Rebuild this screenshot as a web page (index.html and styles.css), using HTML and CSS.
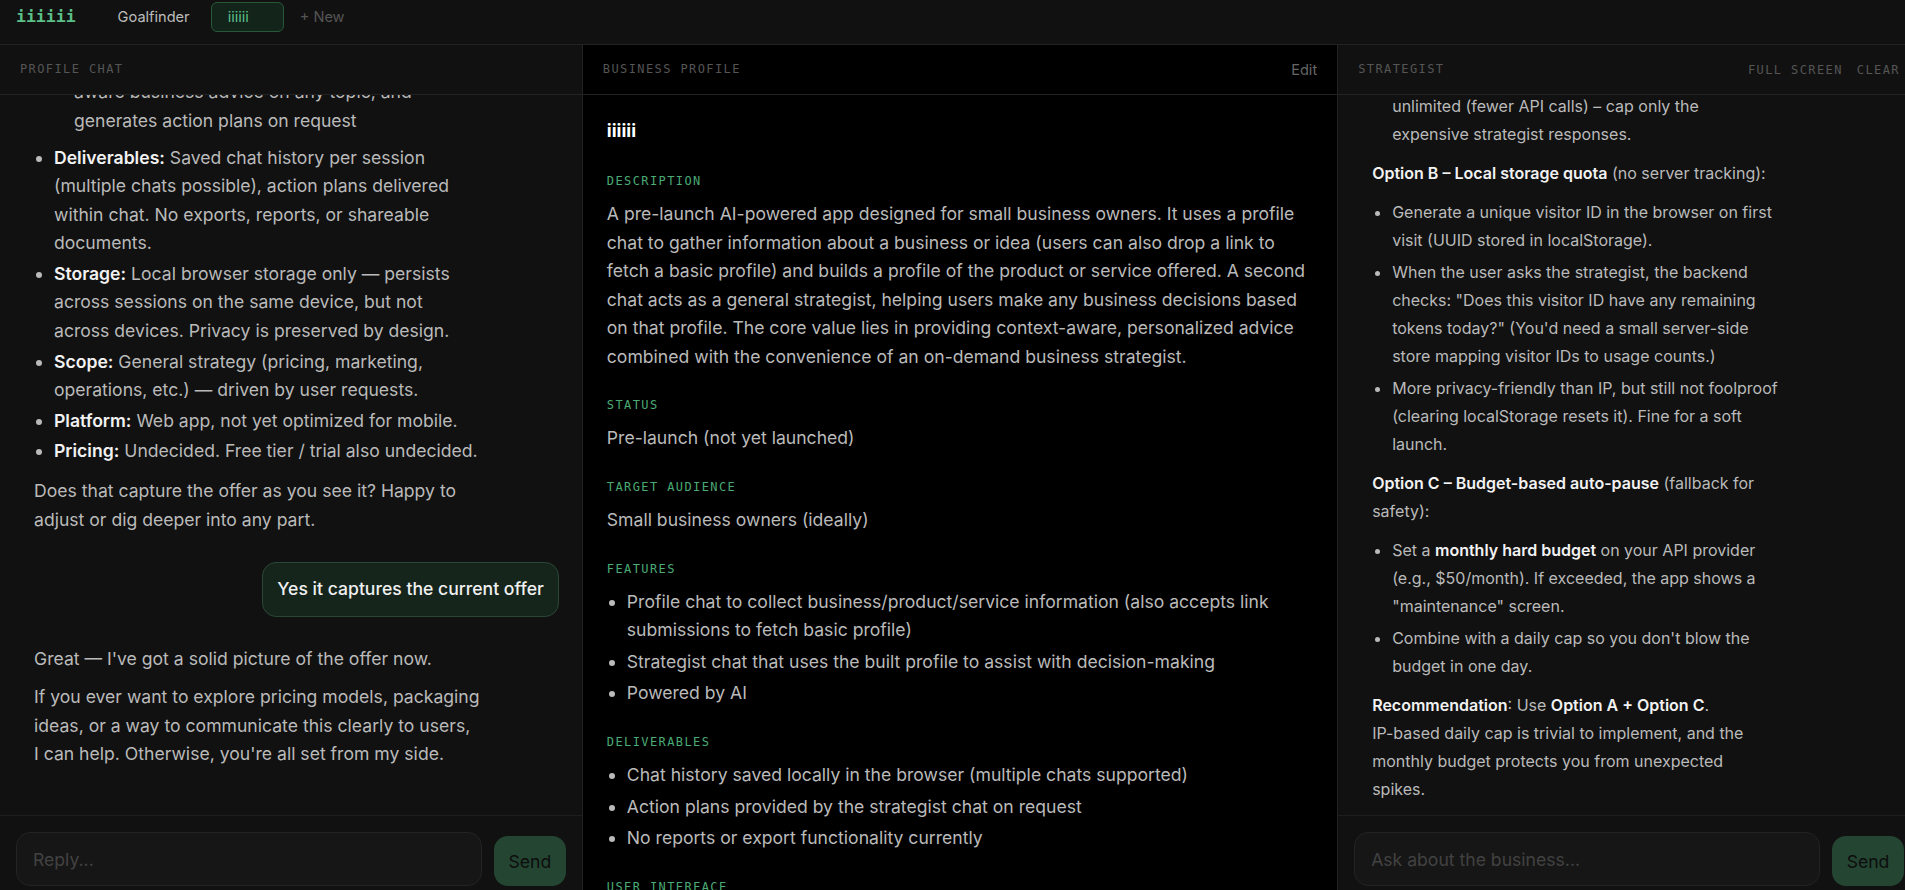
FILE: index.html
```html
<!DOCTYPE html>
<html lang="en">
<head>
    <meta charset="UTF-8">
    <meta name="viewport" content="width=device-width, initial-scale=1.0">
    <title>iiiiii - Business Profile</title>
    <link rel="stylesheet" href="styles.css">
</head>
<body>
    <!-- top bar -->
    <header class="topbar">
        <div class="logo">iiiiii</div>
        <nav class="tabs">
            <button class="tab">Goalfinder</button>
            <button class="tab tab-active">iiiiii</button>
            <button class="tab-new">+ New</button>
        </nav>
    </header>

    <main class="workspace">
        <!-- profile chat -->
        <section class="panel chat-panel">
            <div class="panel-header">
                <span class="panel-title">Profile chat</span>
            </div>
            <div class="chat-log">
                <div class="chat-thread">
                    <div class="msg">
                        <p>Hi! Let's put together a profile of your business. Tell me what you're building, or paste a link and I'll pull the basics from it.</p>
                    </div>
                    <div class="msg msg-user">It's an AI app for small business owners. One chat builds a profile of the business, the other one is a strategist you can ask anything.</div>
                    <div class="msg">
                        <p>Nice — a clear two-part setup. A few questions so the profile is accurate:</p>
                        <ul>
                            <li>What stage are you at — idea, pre-launch, or live?</li>
                            <li>Who is it for, specifically?</li>
                            <li>How does the profile get built — only through chat, or also from other sources?</li>
                        </ul>
                    </div>
                    <div class="msg msg-user">Pre-launch. Small business owners, ideally. Users can also drop a link and it fetches a basic profile.</div>
                    <div class="msg">
                        <p>Thanks. A couple more things that usually matter for positioning:</p>
                        <ul>
                            <li>What does it do better than a generic AI chatbot?</li>
                            <li>Is there anything the strategist should not do?</li>
                            <li>How do you plan to reach the first users?</li>
                        </ul>
                    </div>
                    <div class="msg msg-user">The difference is context: the strategist knows the business profile, so the advice is specific. It shouldn't act like a lawyer or accountant. First users come from my network and a few small business communities.</div>
                    <div class="msg">
                        <p>That's a useful distinction. So the core value is context-aware, personalized advice combined with the convenience of an on-demand strategist. Is that a fair way to put it?</p>
                    </div>
                    <div class="msg msg-user">Yes, that's exactly it.</div>
                    <div class="msg">
                        <p>Got it. And what does the strategist actually hand back — answers only, or also plans, reports or exports?</p>
                    </div>
                    <div class="msg msg-user">It gives advice on anything and writes action plans when asked. No reports or exports. History is saved per session and you can have multiple chats.</div>
                    <div class="msg">
                        <p>Where does that history live? Are there user accounts?</p>
                    </div>
                    <div class="msg msg-user">Local browser storage only, no accounts. Web app, not optimized for mobile yet. Pricing is undecided, same for a free tier or trial.</div>
                    <div class="msg">
                        <p>Thanks — here's the offer as I understand it:</p>
                        <ul>
                            <li><strong>Product:</strong> AI-powered web app for small business owners that builds a business profile and then acts as a strategist on top of it.</li>
                            <li><strong>Stage:</strong> Pre-launch.</li>
                            <li><strong>Audience:</strong> Small business owners (ideally).</li>
                            <li><strong>Features:</strong>
                                <ul>
                                    <li>Profile chat — collects info about the business or idea, and can fetch a basic profile from a link</li>
                                    <li>Strategist chat — uses the profile for context-aware business advice on any topic, and generates action plans on request</li>
                                </ul>
                            </li>
                            <li><strong>Deliverables:</strong> Saved chat history per session (multiple chats possible), action plans delivered within chat. No exports, reports, or shareable documents.</li>
                            <li><strong>Storage:</strong> Local browser storage only — persists across sessions on the same device, but not across devices. Privacy is preserved by design.</li>
                            <li><strong>Scope:</strong> General strategy (pricing, marketing, operations, etc.) — driven by user requests.</li>
                            <li><strong>Platform:</strong> Web app, not yet optimized for mobile.</li>
                            <li><strong>Pricing:</strong> Undecided. Free tier / trial also undecided.</li>
                        </ul>
                        <p>Does that capture the offer as you see it? Happy to adjust or dig deeper into any part.</p>
                    </div>
                    <div class="msg msg-user">Yes it captures the current offer</div>
                    <div class="msg">
                        <p>Great — I've got a solid picture of the offer now.</p>
                        <p>If you ever want to explore pricing models, packaging ideas, or a way to communicate this clearly to users,<br>I can help. Otherwise, you're all set from my side.</p>
                    </div>
                </div>
            </div>
            <form class="composer">
                <input type="text" placeholder="Reply...">
                <button type="button">Send</button>
            </form>
        </section>

        <!-- business profile -->
        <section class="panel profile-panel">
            <div class="panel-header">
                <span class="panel-title">Business profile</span>
                <button class="header-link">Edit</button>
            </div>
            <div class="profile-body">
                <h1 class="profile-name">iiiiii</h1>

                <div class="field">
                    <h2 class="field-label">Description</h2>
                    <p>A pre-launch AI-powered app designed for small business owners. It uses a profile chat to gather information about a business or idea (users can also drop a link to fetch a basic profile) and builds a profile of the product or service offered. A second chat acts as a general strategist, helping users make any business decisions based on that profile. The core value lies in providing context-aware, personalized advice combined with the convenience of an on-demand business strategist.</p>
                </div>

                <div class="field">
                    <h2 class="field-label">Status</h2>
                    <p>Pre-launch (not yet launched)</p>
                </div>

                <div class="field">
                    <h2 class="field-label">Target audience</h2>
                    <p>Small business owners (ideally)</p>
                </div>

                <div class="field">
                    <h2 class="field-label">Features</h2>
                    <ul>
                        <li>Profile chat to collect business/product/service information (also accepts link submissions to fetch basic profile)</li>
                        <li>Strategist chat that uses the built profile to assist with decision-making</li>
                        <li>Powered by AI</li>
                    </ul>
                </div>

                <div class="field">
                    <h2 class="field-label">Deliverables</h2>
                    <ul>
                        <li>Chat history saved locally in the browser (multiple chats supported)</li>
                        <li>Action plans provided by the strategist chat on request</li>
                        <li>No reports or export functionality currently</li>
                    </ul>
                </div>

                <div class="field">
                    <h2 class="field-label">User interface</h2>
                    <ul>
                        <li>Two chats side by side: profile chat and strategist chat</li>
                        <li>Editable business profile panel</li>
                        <li>Web app, not yet optimized for mobile</li>
                    </ul>
                </div>

                <div class="field">
                    <h2 class="field-label">Storage</h2>
                    <p>Local browser storage only, no user accounts</p>
                </div>

                <div class="field">
                    <h2 class="field-label">Platform</h2>
                    <p>Web app (not yet optimized for mobile)</p>
                </div>

                <div class="field">
                    <h2 class="field-label">Pricing</h2>
                    <p>Undecided (free tier / trial also undecided)</p>
                </div>
            </div>
        </section>

        <!-- strategist chat -->
        <section class="panel chat-panel">
            <div class="panel-header">
                <span class="panel-title">Strategist</span>
                <div class="header-actions">
                    <button class="header-action">Full screen</button>
                    <button class="header-action">Clear</button>
                </div>
            </div>
            <div class="chat-log chat-log-compact">
                <div class="chat-thread chat-thread-live">
                    <div class="msg msg-user">How do I keep API costs under control after launch? There are no accounts, so I can't limit per user.</div>
                    <div class="msg">
                        <p>Without accounts you can't enforce per-user limits perfectly, but there are solid options for a soft launch:</p>
                        <p><strong>Option A – IP-based daily cap</strong> (simplest):</p>
                        <ul>
                            <li>Count strategist requests per IP address on the server and block after a set number per day (e.g., 20).</li>
                            <li>Reset counters daily; a small key-value store is enough.</li>
                            <li>Profile chat can stay<br>unlimited (fewer API calls) – cap only the<br>expensive strategist responses.</li>
                        </ul>
                        <p><strong>Option B – Local storage quota</strong> (no server tracking):</p>
                        <ul>
                            <li>Generate a unique visitor ID in the browser on first visit (UUID stored in localStorage).</li>
                            <li>When the user asks the strategist, the backend checks: "Does this visitor ID have any remaining tokens today?" (You'd need a small server-side store mapping visitor IDs to usage counts.)</li>
                            <li>More privacy-friendly than IP, but still not foolproof (clearing localStorage resets it). Fine for a soft launch.</li>
                        </ul>
                        <p><strong>Option C – Budget-based auto-pause</strong> (fallback for safety):</p>
                        <ul>
                            <li>Set a <strong>monthly hard budget</strong> on your API provider (e.g., $50/month). If exceeded, the app shows a "maintenance" screen.</li>
                            <li>Combine with a daily cap so you don't blow the budget in one day.</li>
                        </ul>
                        <p><strong>Recommendation</strong>: Use <strong>Option A + Option C</strong>.<br>IP-based daily cap is trivial to implement, and the monthly budget protects you from unexpected<br>spikes.</p>
                    </div>
                </div>
            </div>
            <form class="composer">
                <input type="text" placeholder="Ask about the business...">
                <button type="button">Send</button>
            </form>
        </section>
    </main>
</body>
</html>
```

FILE: styles.css
```css
/* base */
* {
    margin: 0;
    padding: 0;
    box-sizing: border-box;
}

body {
    font-family: Inter, "Noto Sans", sans-serif;
    font-size: 17.6px;
    line-height: 1.625;
    background-color: #111111;
    color: #bababa;
    height: 100vh;
    overflow: hidden;
}

button,
input {
    font-family: inherit;
}

button {
    cursor: pointer;
}

/* top bar */
.topbar {
    height: 45px;
    display: flex;
    align-items: center;
    padding: 2px 16px 12px;
    background: #111111;
    border-bottom: 1px solid #222222;
}

.logo {
    font-family: "DejaVu Sans Mono", monospace;
    font-size: 16.5px;
    font-weight: bold;
    line-height: 1;
    color: #5bbf88;
    margin-right: 25px;
}

.tabs {
    display: flex;
    align-items: center;
    gap: 4px;
}

.tab {
    height: 30px;
    min-width: 73px;
    padding: 0 16px;
    border: 1px solid transparent;
    border-radius: 6px;
    background: none;
    color: #bdbdbd;
    font-size: 14.6px;
    text-align: left;
}

.tab-active {
    border-color: #28573a;
    background: #13241a;
    color: #5bbf88;
}

.tab-new {
    padding: 0 12px;
    border: none;
    background: none;
    color: #555555;
    font-size: 14.6px;
}

/* three columns */
.workspace {
    display: grid;
    grid-template-columns: 1fr 1.3fr 1fr;
    width: 1920px;
    height: calc(100vh - 45px);
}

.panel {
    display: flex;
    flex-direction: column;
    min-height: 0;
    overflow: hidden;
    background: #111111;
}

.profile-panel {
    background: #000000;
    border-left: 1px solid #222222;
    border-right: 1px solid #222222;
}

.panel-header {
    height: 50px;
    flex-shrink: 0;
    display: flex;
    align-items: center;
    justify-content: space-between;
    padding: 0 20px;
    border-bottom: 1px solid #222222;
}

.panel-title,
.header-action {
    font-family: "DejaVu Sans Mono", monospace;
    font-size: 12px;
    letter-spacing: 1.4px;
    text-transform: uppercase;
    color: #555555;
}

.header-actions {
    display: flex;
    gap: 14px;
}

.header-action {
    border: none;
    background: none;
}

.header-link {
    border: none;
    background: none;
    color: #666666;
    font-size: 14.6px;
}

/* chat */
.chat-log {
    flex: 1;
    min-height: 0;
    overflow-y: auto;
    display: flex;
    flex-direction: column-reverse;
}

.chat-thread {
    display: flex;
    flex-direction: column;
    align-items: flex-start;
    gap: 16px;
    padding: 20px 23px 34px 20px;
}

.chat-thread-live {
    padding-bottom: 0;
}

.msg {
    max-width: 475px;
    padding: 12px 14px;
}

.msg-user {
    align-self: flex-end;
    background: #16251c;
    border: 1px solid #2a4736;
    border-radius: 14px;
    color: #f0f0f0;
    font-weight: 500;
}

.msg p {
    margin-bottom: 10px;
}

.msg ul {
    padding-left: 20px;
    margin-bottom: 11px;
}

.msg li {
    margin-bottom: 2px;
}

.msg p:last-child,
.msg ul:last-child,
.msg li:last-child {
    margin-bottom: 0;
}

/* nested list inside a bullet */
.msg li > ul:last-child {
    margin: 3px 0 8px;
}

.msg strong {
    color: #f2f2f2;
    font-weight: 600;
}

/* strategist answers are set a little smaller */
.chat-log-compact {
    font-size: 16px;
    line-height: 28px;
}

.chat-log-compact .msg {
    max-width: 440px;
}

.chat-log-compact .msg p,
.chat-log-compact .msg ul {
    margin-bottom: 11px;
}

.chat-log-compact .msg li {
    margin-bottom: 4px;
}

.chat-log-compact .msg p:last-child,
.chat-log-compact .msg ul:last-child,
.chat-log-compact .msg li:last-child {
    margin-bottom: 0;
}

.composer {
    flex-shrink: 0;
    display: flex;
    align-items: flex-end;
    gap: 12px;
    padding: 16px 16px 4px;
    border-top: 1px solid #1e1e1e;
}

.composer input {
    flex: 1;
    min-width: 0;
    height: 54px;
    padding: 0 16px;
    background: #161616;
    border: 1px solid #232323;
    border-radius: 14px;
    color: #dddddd;
    font-size: 17.6px;
    outline: none;
}

.composer input::placeholder {
    color: #424242;
}

.composer button {
    width: 72px;
    height: 50px;
    border: none;
    border-radius: 14px;
    background: #234532;
    color: #0d0d0d;
    font-size: 17.6px;
}

/* business profile */
.profile-body {
    flex: 1;
    min-height: 0;
    overflow-y: auto;
    padding: 24px 24px 24px;
}

.profile-name {
    font-size: 18px;
    font-weight: 700;
    line-height: 24px;
    color: #ffffff;
    padding-bottom: 4px;
}

.field {
    margin-top: 26px;
}

.field-label {
    font-family: "DejaVu Sans Mono", monospace;
    font-size: 12px;
    font-weight: normal;
    line-height: 16px;
    letter-spacing: 1.4px;
    text-transform: uppercase;
    color: #4aab75;
    margin-bottom: 11px;
}

.field ul {
    padding-left: 20px;
}

.field li {
    margin-bottom: 3px;
}

.field li:last-child {
    margin-bottom: 0;
}

/* thin scrollbars */
.chat-log::-webkit-scrollbar,
.profile-body::-webkit-scrollbar {
    width: 4px;
}

.chat-log::-webkit-scrollbar-track,
.profile-body::-webkit-scrollbar-track {
    background: transparent;
}

.chat-log::-webkit-scrollbar-thumb,
.profile-body::-webkit-scrollbar-thumb {
    background: #2c2c2c;
    border-radius: 2px;
}
```
